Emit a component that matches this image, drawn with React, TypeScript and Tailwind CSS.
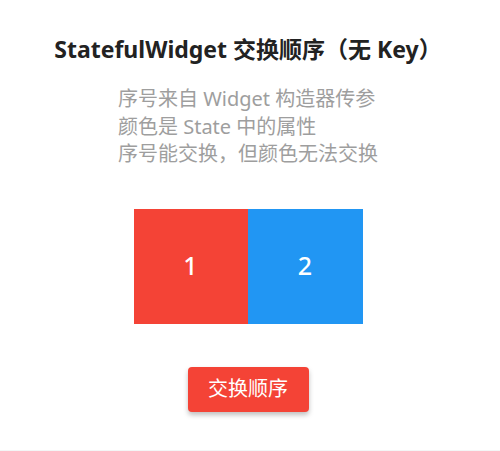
export default function App() {
  const font = { fontFamily: '"Noto Sans", "Noto Sans CJK SC", sans-serif' }
  return (
    <div style={font} className="w-[500px] h-[451px] bg-white flex flex-col items-center pr-[4px] border-b border-[#f3f6f6]">
      <h1 className="mt-[36px] text-[23px] font-bold text-[#222] leading-[26px]">StatefulWidget 交换顺序（无 Key）</h1>
      <div className="mt-[23px] text-[20px] leading-[27.5px] text-[#9e9e9e]">
        <p>序号来自 Widget 构造器传参</p>
        <p>颜色是 State 中的属性</p>
        <p>序号能交换，但颜色无法交换</p>
      </div>
      <div className="mt-[41px] flex">
        <div className="w-[114px] h-[115px] bg-[#f44336] flex items-center justify-center text-white text-[25px] font-medium">1</div>
        <div className="w-[115px] h-[115px] bg-[#2196f3] flex items-center justify-center text-white text-[25px] font-medium">2</div>
      </div>
      <button className="mt-[43px] w-[121px] h-[45px] rounded-[4px] bg-[#f44336] text-white text-[20px] shadow-[0_3px_5px_rgba(0,0,0,0.25)]">交换顺序</button>
    </div>
  )
}
